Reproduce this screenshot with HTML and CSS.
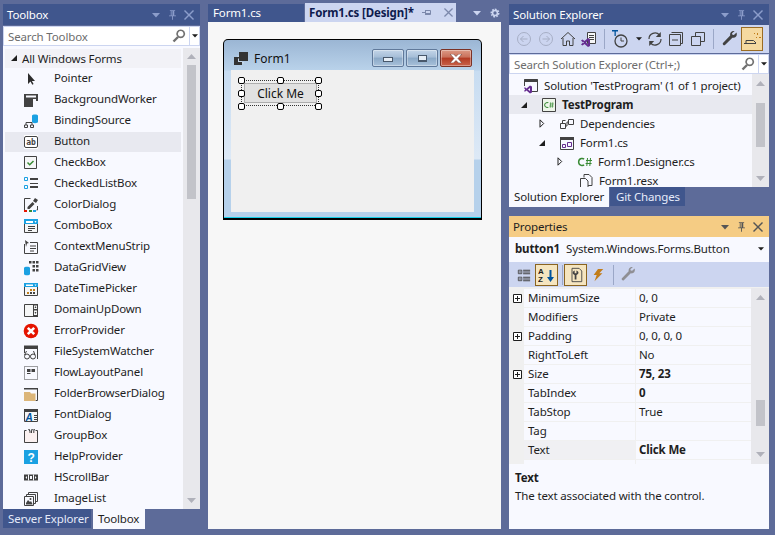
FILE: index.html
```html
<!DOCTYPE html>
<html lang="en">
<head>
<meta charset="utf-8">
<title>Form1.cs [Design]</title>
<link rel="stylesheet" href="styles.css">
</head>
<body>
<svg class="sprites" xmlns="http://www.w3.org/2000/svg">
  <symbol id="t-arrow" viewBox="0 0 8 5"><path d="M0 0h8L4 4.500z"/></symbol>
  <symbol id="t-pin" viewBox="0 0 8 11"><path d="M1 0h6v1H6v5h2v1H4.500v4h-1V7H0V6h2V1H1zM3 1v5h1V1z"/></symbol>
  <symbol id="t-close" viewBox="0 0 10 10"><path d="M1 0l4 4 4-4 1 1-4 4 4 4-1 1-4-4-4 4-1-1 4-4-4-4z"/></symbol>
  <symbol id="mag" viewBox="0 0 14 14"><path fill="none" stroke="#717171" stroke-width="1.600" d="M8.700 1.200a3.600 3.600 0 1 0 .01 0z"/><path fill="none" stroke="#717171" stroke-width="2.400" d="M6 8L1.500 12.500"/></symbol>
  <symbol id="csharp" viewBox="0 0 16 10"><path fill="none" stroke="#388a34" stroke-width="1.500" d="M7 2.200C6.300 1.200 2 .6 1.600 5c.3 4.300 4.700 3.800 5.400 2.800"/><path fill="none" stroke="#388a34" d="M10.500 1l-.7 8M13.500 1l-.7 8M9 3.500h6M8.600 6.500h6"/></symbol>
  <symbol id="wrench" viewBox="0 0 16 16"><path d="M14.500 1.500l-2.600 2.600-1.500-.3-.4-1.500L12.700 0C10 -.6 7.600 1.500 8.200 4.500L1 12c-1 1.200.8 3 2 2l7.400-7.300c3.100.8 5.300-2 4.100-5.200z"/></symbol>
  <symbol id="plus" viewBox="0 0 9 9"><path fill="#fff" stroke="#1e1e1e" d="M.5.500h8v8h-8z"/><path fill="none" stroke="#1e1e1e" d="M2 4.500h5M4.500 2v5"/></symbol>
</svg>

<main class="app">
  <section class="column toolbox-col">
    <header class="title-bar">
      <span class="title-text">Toolbox</span>
      <span class="title-tools"><svg class="t-a"><use href="#t-arrow"/></svg><svg class="t-p"><use href="#t-pin"/></svg><svg class="t-c"><use href="#t-close"/></svg></span>
    </header>
    <div class="search">
      <span class="search-text">Search Toolbox</span>
      <svg class="mag"><use href="#mag"/></svg>
      <span class="search-drop"><svg class="drop"><use href="#t-arrow"/></svg></span>
    </div>
    <div class="list-wrap">
      <ul class="tool-list">
        <li class="tool-head"><svg class="twisty-open" viewBox="0 0 6 6"><path d="M6 0v6H0z"/></svg>All Windows Forms</li>
        <li class="tool"><svg class="ico" viewBox="0 0 16 16"><path fill="#2d2d2d" d="M5 2v11l2.500-2.500 1.800 3.300 1.300-.7-1.700-3.100H12z"/></svg>Pointer</li>
        <li class="tool"><svg class="ico" viewBox="0 0 16 16"><path fill="#424242" d="M1 2h14v7h-2V7H10v8H1z"/><path fill="#f8f9ff" d="M3 3.500h10v2H3z"/></svg>BackgroundWorker</li>
        <li class="tool"><svg class="ico" viewBox="0 0 16 16"><path fill="#1ba1e2" d="M9 2.500c0-1.500 6-1.500 6 0V9c0 1.500-6 1.500-6 0z"/><path fill="none" stroke="#424242" d="M1.500 14.500h3v-2.500h-3zM3 12V9.500h6V12M7.500 14.500h3v-2.500h-3z"/></svg>BindingSource</li>
        <li class="tool hot"><svg class="ico" viewBox="0 0 16 16"><rect x="1" y="1" width="14" height="14" fill="#fff"/><rect x="1.500" y="2.500" width="13" height="11" rx="1.500" fill="none" stroke="#424242"/><text x="8" y="11" class="ab">ab</text></svg>Button</li>
        <li class="tool"><svg class="ico" viewBox="0 0 16 16"><path fill="#f5f6f7" stroke="#424242" d="M1.500 1.500h12v12h-12z"/><path fill="none" stroke="#388a34" stroke-width="1.500" d="M4.500 7.500l2.200 2.200L10.500 6"/></svg>CheckBox</li>
        <li class="tool"><svg class="ico" viewBox="0 0 16 16"><path fill="none" stroke="#1ba1e2" d="M1.500 1.500h3v3h-3zM1.500 9.500h3v3h-3z"/><path fill="#424242" d="M7 2h8v2H7zM7 7h8v1H7zM7 10h8v2H7z"/></svg>CheckedListBox</li>
        <li class="tool"><svg class="ico" viewBox="0 0 16 16"><path fill="none" stroke="#424242" d="M1.500 13V1.500h6M14.500 9v4h-1"/><path fill="#424242" d="M4.500 10l5-5 2 2-5 5H4.500zM10 4l2-3 3 2-2 3z"/><path fill="#e51400" d="M1 13h3v2H1z"/><path fill="#388a34" d="M6 13h3v2H6z"/><path fill="#1ba1e2" d="M10 13h3v2h-3z"/></svg>ColorDialog</li>
        <li class="tool"><svg class="ico" viewBox="0 0 16 16"><path fill="#f5f6f7" stroke="#424242" d="M1.500 1.500h13v13h-13z"/><path fill="#1ba1e2" d="M1 1h14v5H1z"/><path fill="#fff" d="M3 3h7v2H3zM11.500 3h2l-1 2z"/><path fill="#424242" d="M5 8h7v1H5zM5 10h7v1H5zM5 12h4v1H5z"/></svg>ComboBox</li>
        <li class="tool"><svg class="ico" viewBox="0 0 16 16"><path fill="none" stroke="#424242" d="M1.500 5v9.500h13v-11H7"/><path fill="#424242" d="M2 1l4 3-2 .5L3 8zM7 6.500h6v1H7zM7 9h6v1H7zM7 11.500h4v1H7z"/></svg>ContextMenuStrip</li>
        <li class="tool"><svg class="ico" viewBox="0 0 16 16"><path fill="#1ba1e2" d="M1 8c0-1.700 6-1.700 6 0v6c0 1.700-6 1.700-6 0z"/><path fill="#424242" d="M6 1h2.500v2.500H6zM9.500 1H12v2.500H9.500zM13 1h2.500v2.500H13zM9.500 5H12v2.500H9.500zM13 5h2.500v2.500H13zM9.500 9H12v2.500H9.500zM13 9h2.500v2.500H13z"/></svg>DataGridView</li>
        <li class="tool"><svg class="ico" viewBox="0 0 16 16"><path fill="#f5f6f7" stroke="#424242" d="M1.500 2.500h13v12h-13z"/><path fill="#1ba1e2" d="M1 2h14v4H1z"/><path fill="#fff" d="M3 3.500h7v1.500H3zM11.500 3.500h2l-1 1.500z"/><path fill="#c27d1a" d="M7 8h2v2H7zM10 8h2v2h-2zM4 11h2v2H4z"/><path fill="#424242" d="M7 11h2v2H7zM10 11h2v2h-2z"/></svg>DateTimePicker</li>
        <li class="tool"><svg class="ico" viewBox="0 0 16 16"><path fill="#f5f6f7" stroke="#424242" d="M1.500 2.500h13v12h-13z"/><path fill="#424242" d="M10 2h5v13h-5z"/><path fill="#f5f6f7" d="M11 3.500h3v3.500h-3zM11 8.500h3V13h-3z"/><path fill="#424242" d="M12.500 4l1 2h-2zM11.500 10h2l-1 2z"/></svg>DomainUpDown</li>
        <li class="tool"><svg class="ico" viewBox="0 0 16 16"><circle cx="8" cy="8" r="7.300" fill="#e51400"/><path fill="none" stroke="#fff" stroke-width="2.600" d="M4.800 4.800l6.400 6.400M11.200 4.800l-6.400 6.400"/></svg>ErrorProvider</li>
        <li class="tool"><svg class="ico" viewBox="0 0 16 16"><path fill="none" stroke="#424242" d="M1.500 9V2.500h13V15"/><path fill="#424242" d="M1 1.500h14V5H1z"/><circle cx="4" cy="12.500" r="2.500" fill="none" stroke="#424242"/><circle cx="10" cy="12.500" r="2.500" fill="none" stroke="#424242"/><path fill="none" stroke="#424242" d="M6.500 12h1M1.500 11l2-4M12 11l-1.500-4"/></svg>FileSystemWatcher</li>
        <li class="tool"><svg class="ico" viewBox="0 0 16 16"><path fill="none" stroke="#424242" stroke-dasharray="1 1" d="M1.500 1.500h13v13h-13z"/><path fill="#424242" d="M4 4h3.500v3H4zM8.500 4H12v3H8.500zM4 8h3.500v1H4z"/></svg>FlowLayoutPanel</li>
        <li class="tool"><svg class="ico" viewBox="0 0 16 16"><path fill="none" stroke="#424242" d="M1.500 2.500h13v12h-2"/><path fill="#424242" d="M1 2h14v1.500H1z"/><path fill="#dcb67a" d="M1 6h6l1 1.500h4.500V15H1z"/></svg>FolderBrowserDialog</li>
        <li class="tool"><svg class="ico" viewBox="0 0 16 16"><path fill="#f5f6f7" stroke="#424242" d="M1.500 2.500h13v12h-13z"/><path fill="#424242" d="M1 2h14v3H1zM11 8h3v1h-3zM11 10h3v1h-3zM11 12h3v1h-3z"/><text x="6" y="14" class="glyph-a">A</text></svg>FontDialog</li>
        <li class="tool"><svg class="ico" viewBox="0 0 16 16"><path fill="#fbf1f1" d="M1 3h14v12H1z"/><path fill="none" stroke="#424242" d="M3.500 2.500h-2v12h13v-12h-2"/><path fill="#424242" d="M5 1h1.500l1 2v2h-1V3.500zM8.500 1H10L9 3v2H8V3zM10.500 1H12l-.7 2v2h-1V3z"/></svg>GroupBox</li>
        <li class="tool"><svg class="ico" viewBox="0 0 16 16"><path fill="#1ba1e2" d="M1 1h14v14H1z"/><text x="8" y="12.500" class="glyph-q">?</text></svg>HelpProvider</li>
        <li class="tool"><svg class="ico" viewBox="0 0 16 16"><path fill="#424242" d="M1 4.500h14v6H1z"/><path fill="#f8f9ff" d="M5 4.500h1v6H5zM10 4.500h1v6h-1zM7 6h2v3H7z"/><path fill="#f8f9ff" d="M4 6v3L2.500 7.500zM12 6v3l1.500-1.500z"/></svg>HScrollBar</li>
        <li class="tool"><svg class="ico" viewBox="0 0 16 16"><path fill="none" stroke="#424242" d="M1.500 5.500h9v9h-9zM3.500 5V3.500h9v9H11M5.500 3V1.500h9v9H13"/><path fill="#424242" d="M3 12l2-3 2 2 1-1 1.500 3v.5H3z"/><circle cx="7.500" cy="8" r="1" fill="#424242"/></svg>ImageList</li>
      </ul>
      <div class="scroll scroll-toolbox">
        <svg class="s-up" viewBox="0 0 9 5"><path d="M4.500 0L9 5H0z"/></svg>
        <div class="thumb"></div>
        <svg class="s-down" viewBox="0 0 9 5"><path d="M0 0h9L4.500 5z"/></svg>
      </div>
    </div>
    <nav class="bottom-tabs tool-tabs">
      <span class="btab">Server Explorer</span>
      <span class="btab on">Toolbox</span>
    </nav>
  </section>

  <section class="column doc-col">
    <div class="doc-tabs">
      <span class="doc-tab">Form1.cs</span>
      <span class="doc-tab active"><span class="tab-label">Form1.cs [Design]*</span>
        <svg class="tab-pin" viewBox="0 0 10 8"><path fill="none" stroke="#7c88ab" d="M0 3.500h3.500M3.500 1v5M3.500 1.500h5v4h-5M3.500 4.500h5"/></svg>
        <svg class="tab-close"><use href="#t-close"/></svg>
      </span>
      <span class="doc-tools">
        <svg class="doc-drop"><use href="#t-arrow"/></svg>
        <svg class="gear" viewBox="0 0 10 10"><path fill="none" stroke="#ccd5f0" stroke-width="2" stroke-dasharray="1.600 1" d="M5 1.500a3.500 3.500 0 1 1-.01 0z"/><circle cx="5" cy="5" r="2.400" fill="none" stroke="#ccd5f0" stroke-width="1.500"/></svg>
      </span>
    </div>
    <div class="design-surface">
      <div class="win-form">
        <div class="win-title">
          <svg class="win-ico" viewBox="0 0 14 13"><path fill="#333" d="M5 0h9v9H5z"/><path fill="#c6d7ea" d="M3.500 3.500H5V10h5v1.500H3.500z"/><path fill="#333" d="M0 5h8v8H0z"/><path fill="#c6d7ea" d="M4 6.500h1V9h3v1H4z"/></svg>
          <span class="win-name">Form1</span>
          <span class="win-btns">
            <span class="wb"><i class="wb-min"></i></span>
            <span class="wb"><i class="wb-max"></i></span>
            <span class="wb wb-close"><svg viewBox="0 0 12 9"><path fill="#fff" stroke="#6b3a30" stroke-width=".6" d="M0 0h3.500L6 2.500 8.500 0H12L8 4.500 12 9H8.500L6 6.500 3.500 9H0L4 4.500z"/></svg></span>
          </span>
        </div>
        <div class="win-client">
          <div class="selection">
            <button class="win-button" type="button">Click Me</button>
            <i class="hd h-tl"></i><i class="hd h-tc"></i><i class="hd h-tr"></i>
            <i class="hd h-ml"></i><i class="hd h-mr"></i>
            <i class="hd h-bl"></i><i class="hd h-bc"></i><i class="hd h-br"></i>
          </div>
        </div>
      </div>
    </div>
  </section>

  <section class="column right-col">
    <div class="sol-panel">
      <header class="title-bar">
        <span class="title-text">Solution Explorer</span>
        <span class="title-tools"><svg class="t-a"><use href="#t-arrow"/></svg><svg class="t-p"><use href="#t-pin"/></svg><svg class="t-c"><use href="#t-close"/></svg></span>
      </header>
      <div class="toolbar sol-toolbar">
        <svg class="tb i-back" viewBox="0 0 16 16"><circle cx="8" cy="8" r="6.500" fill="none" stroke="#a7afc6"/><path fill="none" stroke="#a7afc6" d="M11.500 8h-7M7.500 5l-3 3 3 3"/></svg>
        <svg class="tb i-fwd" viewBox="0 0 16 16"><circle cx="8" cy="8" r="6.500" fill="none" stroke="#a7afc6"/><path fill="none" stroke="#a7afc6" d="M4.500 8h7M8.500 5l3 3-3 3"/></svg>
        <svg class="tb i-home" viewBox="0 0 16 16"><path fill="none" stroke="#424242" d="M1 8l7-6.500L15 8M3 7v7.500h3.500V10h3v4.500H13V7"/></svg>
        <svg class="tb i-vsdoc" viewBox="0 0 16 16"><path fill="#f5f6f7" stroke="#424242" d="M6.500 1.500h8v11h-8z"/><path fill="#424242" d="M8 4h5v1H8zM8 6h5v1H8zM8 8h5v1H8z"/><path fill="#652d90" d="M0 9.500l1.500-1 2 1.500L7 7l2 1v7l-2 1-3.500-3-2 1.500-1.500-1 2-2zM3 11.500l-1-.8v1.600zM7 9.500L5 11.500l2 2z"/></svg>
        <i class="tb-sep"></i>
        <svg class="tb i-clock" viewBox="0 0 18 18"><path fill="#00539c" d="M0 0h6v1.500H3.800V6H2.500V1.500H0z"/><circle cx="9" cy="11" r="6" fill="none" stroke="#424242" stroke-width="1.300"/><path fill="none" stroke="#424242" d="M9 7.500V11h3"/></svg>
        <svg class="tb-drop"><use href="#t-arrow"/></svg>
        <svg class="tb i-refresh" viewBox="0 0 16 16"><path fill="none" stroke="#424242" stroke-width="1.200" d="M2 8a6 6 0 0 1 10.500-4M14 8a6 6 0 0 1-10.500 4"/><path fill="#424242" d="M13.800 1v5h-5zM2.200 15v-5h5z"/></svg>
        <svg class="tb i-collapse" viewBox="0 0 16 16"><path fill="#ccd5f0" stroke="#424242" d="M3.500 1.500h11v11h-2"/><path fill="#ccd5f0" stroke="#424242" d="M1.500 3.500h11v11h-11z"/><path fill="#424242" d="M4 8.500h6v1H4z"/></svg>
        <svg class="tb i-copy" viewBox="0 0 16 16"><path fill="#ccd5f0" stroke="#424242" d="M5.500 1.500h9v9h-9z"/><path fill="#ccd5f0" stroke="#424242" d="M1.500 5.500h9v9h-9z"/></svg>
        <i class="tb-sep sep2"></i>
        <svg class="tb i-wrench"><use href="#wrench"/></svg>
        <span class="tb-active"><svg viewBox="0 0 18 14"><path fill="none" stroke="#424242" d="M1 11.500h12M3 11V8.500h7.500L13 11"/><path fill="#c27d1a" d="M14 1h1v2h-1zM11 1h1v1h-1zM16 5h2v1h-2zM13 5h1v1h-1z"/></svg></span>
      </div>
      <div class="search">
        <span class="search-text">Search Solution Explorer (Ctrl+;)</span>
        <svg class="mag"><use href="#mag"/></svg>
        <span class="search-drop"><svg class="drop"><use href="#t-arrow"/></svg></span>
      </div>
      <div class="list-wrap tree-wrap">
        <ul class="tree">
          <li class="node lv0"><svg class="node-ico" viewBox="0 0 16 16"><path fill="none" stroke="#424242" d="M1.500 8V1.500h13v12H9"/><path fill="#424242" d="M1 1.500h14V4H1z"/><path fill="#652d90" d="M1 10l1-.8 1.500 1.300L7 7.500l2 1v6l-2 1L3.500 12.500 2 13.800l-1-.8 1.300-1.500zM7 10L5 11.500 7 13z"/></svg>Solution 'TestProgram' (1 of 1 project)</li>
          <li class="node lv1 selected"><svg class="tw open" viewBox="0 0 6 6"><path d="M6 0v6H0z"/></svg><svg class="node-ico" viewBox="0 0 16 16"><path fill="#eef5ea" stroke="#424242" d="M1.500 1.500h13v13h-13z"/><use href="#csharp" x="2.500" y="4" width="11" height="8"/></svg><b>TestProgram</b></li>
          <li class="node lv2"><svg class="tw" viewBox="0 0 5 9"><path fill="none" stroke="#1e1e1e" d="M.5.800v7.400L4.200 4.500z"/></svg><svg class="node-ico" viewBox="0 0 16 16"><path fill="none" stroke="#424242" d="M1.500 7.500h5v5h-5zM9.500 3.500h5v5h-5zM6.500 10H8V6h1.500M3.500 7V4.500h3"/></svg>Dependencies</li>
          <li class="node lv2"><svg class="tw open" viewBox="0 0 6 6"><path d="M6 0v6H0z"/></svg><svg class="node-ico" viewBox="0 0 16 16"><path fill="none" stroke="#424242" d="M1.500 2.500h13v12h-13z"/><path fill="#424242" d="M1 2h14v3H1z"/><path fill="none" stroke="#652d90" d="M3.500 9.500h3v3h-3zM8.500 7.500h4v4h-4z"/></svg>Form1.cs</li>
          <li class="node lv3"><svg class="tw" viewBox="0 0 5 9"><path fill="none" stroke="#1e1e1e" d="M.5.800v7.400L4.200 4.500z"/></svg><svg class="node-ico" viewBox="0 0 16 16"><use href="#csharp" x="0" y="3" width="16" height="10"/></svg>Form1.Designer.cs</li>
          <li class="node lv3"><svg class="node-ico leaf" viewBox="0 0 16 16"><path fill="none" stroke="#424242" d="M6 4.500V1.500h5l3 3v8h-4"/><path fill="#f8f9ff" stroke="#424242" d="M2.500 5.500h5l2.500 2.500v7.500H2.500z"/></svg>Form1.resx</li>
        </ul>
        <div class="scroll scroll-tree">
          <svg class="s-up" viewBox="0 0 9 5"><path d="M4.500 0L9 5H0z"/></svg>
          <div class="thumb"></div>
          <svg class="s-down" viewBox="0 0 9 5"><path d="M0 0h9L4.500 5z"/></svg>
        </div>
      </div>
      <nav class="bottom-tabs sol-tabs">
        <span class="btab on">Solution Explorer</span>
        <span class="btab">Git Changes</span>
      </nav>
    </div>

    <div class="prop-panel">
      <header class="title-bar focus">
        <span class="title-text">Properties</span>
        <span class="title-tools"><svg class="t-a"><use href="#t-arrow"/></svg><svg class="t-p"><use href="#t-pin"/></svg><svg class="t-c"><use href="#t-close"/></svg></span>
      </header>
      <div class="obj-row"><b class="obj-name">button1</b><span class="obj-type">System.Windows.Forms.Button</span><svg class="obj-drop"><use href="#t-arrow"/></svg></div>
      <div class="toolbar prop-toolbar">
        <svg class="pt p-cat" viewBox="0 0 16 16"><path fill="none" stroke="#424242" d="M1.500 2.500h4v4h-4zM1.500 10.500h4v4h-4z"/><path fill="#424242" d="M2.500 4h2v1h-2zM2.500 12h2v1h-2zM7 2h8v1H7zM7 4h8v1H7zM7 6h8v1H7zM7 10h8v1H7zM7 12h8v1H7zM7 14h8v1H7z"/></svg>
        <span class="pt-active a1"><svg viewBox="0 0 18 16"><text x="0" y="7" class="az">A</text><text x="0" y="15" class="az">Z</text><path fill="#00539c" d="M11.500 3h2v7H16l-3.500 5L9 10h2.500z"/></svg></span>
        <i class="tb-sep sep3"></i>
        <span class="pt-active a2"><svg viewBox="0 0 18 18"><path fill="none" stroke="#424242" d="M4.500 1.500h8l3 3v12h-11z"/><path fill="#424242" d="M7.500 4c-3 1-3 4 0 5v5h2V9c3-1 3-4 0-5v3h-2z"/></svg></span>
        <svg class="pt p-bolt" viewBox="0 0 16 16"><path fill="#c27d1a" d="M8 1h6L9.500 6H13L4 15l2.500-7H3z"/></svg>
        <i class="tb-sep sep4"></i>
        <svg class="pt p-wrench"><use href="#wrench"/></svg>
      </div>
      <div class="grid-wrap">
        <div class="prop-grid">
          <div class="prow"><span class="gut"><svg class="plus"><use href="#plus"/></svg></span><span class="pname">MinimumSize</span><span class="pval">0, 0</span></div>
          <div class="prow"><span class="gut"></span><span class="pname">Modifiers</span><span class="pval">Private</span></div>
          <div class="prow"><span class="gut"><svg class="plus"><use href="#plus"/></svg></span><span class="pname">Padding</span><span class="pval">0, 0, 0, 0</span></div>
          <div class="prow"><span class="gut"></span><span class="pname">RightToLeft</span><span class="pval">No</span></div>
          <div class="prow"><span class="gut"><svg class="plus"><use href="#plus"/></svg></span><span class="pname">Size</span><span class="pval"><b>75, 23</b></span></div>
          <div class="prow"><span class="gut"></span><span class="pname">TabIndex</span><span class="pval"><b>0</b></span></div>
          <div class="prow"><span class="gut"></span><span class="pname">TabStop</span><span class="pval">True</span></div>
          <div class="prow"><span class="gut"></span><span class="pname">Tag</span><span class="pval"></span></div>
          <div class="prow current"><span class="gut"></span><span class="pname">Text</span><span class="pval"><b>Click Me</b></span></div>
          <div class="prow clip"><span class="gut"></span><span class="pname"></span><span class="pval"></span></div>
        </div>
        <div class="scroll scroll-grid">
          <svg class="s-up" viewBox="0 0 9 5"><path d="M4.500 0L9 5H0z"/></svg>
          <div class="thumb"></div>
          <svg class="s-down" viewBox="0 0 9 5"><path d="M0 0h9L4.500 5z"/></svg>
        </div>
      </div>
      <div class="desc">
        <b>Text</b>
        <p>The text associated with the control.</p>
      </div>
    </div>
  </section>
</main>
</body>
</html>
```

FILE: styles.css
```css
* { box-sizing: border-box; }
html, body { margin: 0; padding: 0; height: 100%; }
body {
  background: #5d6b99;
  font-family: "Noto Sans", "Open Sans", sans-serif;
  font-size: 11.5px;
  letter-spacing: -.15px;
  color: #1e1e1e;
  overflow: hidden;
}
b { font-weight: 700; }
ul { list-style: none; margin: 0; padding: 0; }
.sprites { display: none; }

.app { display: flex; height: 535px; padding: 4px 0 6px 3px; gap: 8px; }
.column { display: flex; flex-direction: column; height: 525px; }
.toolbox-col { width: 197px; }
.doc-col { width: 293px; }
.right-col { width: 260px; gap: 9px; }

.title-bar {
  display: flex; align-items: center; justify-content: space-between;
  height: 21px; flex: none;
  background: #40568d; color: #fff;
  padding: 0 0 0 4px;
}
.title-text { line-height: 21px; }
.title-tools { display: flex; align-items: center; height: 21px; }
.title-tools svg { fill: #8c9dcb; display: block; }
.t-a { width: 8px; height: 5px; margin-right: 9px; margin-top: 1px; }
.t-p { width: 7px; height: 10px; margin-right: 8px; }
.t-c { width: 10px; height: 10px; margin-right: 6px; }
.focus { background: #f5cc84; color: #1e1e1e; }
.title-bar.focus .title-tools svg { fill: #555; }

.search {
  display: flex; align-items: center;
  height: 20px; margin-top: 1px; flex: none;
  background: #fff; border: 1px solid #ccd5f0;
  padding-left: 4px;
}
.search-text { flex: 1; color: #6d6d6d; line-height: 17px; white-space: nowrap; }
.mag { width: 14px; height: 14px; margin-right: 3px; }
.search-drop { width: 10px; height: 18px; display: flex; align-items: center; justify-content: center; border-left: 1px solid #ccd5f0; }
.drop { width: 6px; height: 4px; fill: #1e1e1e; display: block; }

.list-wrap { display: flex; flex: 1; min-height: 0; background: #f8f9ff; }
.tool-list { flex: 1; padding: 2px 2px 0 2px; overflow: hidden; }
.tool-head {
  display: flex; align-items: center; height: 20px;
  border-top: 1px solid #f8f9ff;
  background: #f2f2f7;
  padding: 0 0 1px 6px; white-space: nowrap;
}
.twisty-open { width: 6px; height: 6px; margin-right: 5px; fill: #1e1e1e; }
.tool { display: flex; align-items: center; height: 21px; padding: 0 0 2px 18px; white-space: nowrap; }
.tool .ico { margin-top: 2px; }
.hot { background: #e8e9f0; border-top: 1px solid #f8f9ff; padding-bottom: 3px; }
.ico { width: 16px; height: 16px; flex: none; margin-right: 15px; }
.ab { font: 700 8px "DejaVu Sans Mono", monospace; fill: #424242; text-anchor: middle; }
.glyph-a { font: italic 700 10px "Liberation Sans", sans-serif; fill: #00539c; text-anchor: middle; }
.glyph-q { font: 700 12px "Liberation Sans", sans-serif; fill: #fff; text-anchor: middle; }
.az { font: 700 8px "Liberation Sans", sans-serif; fill: #1e1e1e; }

.scroll {
  width: 17px; flex: none; background: #e8e8ec;
  display: flex; flex-direction: column; align-items: center;
}
.scroll svg { fill: #b0b1ba; display: block; flex: none; }
.s-up { width: 9px; height: 5px; }
.s-down { width: 9px; height: 5px; margin-top: auto; }
.thumb { background: #c2c3c9; }
.scroll-toolbox { margin-top: 2px; padding: 6px 0 6px; }
.scroll-toolbox .thumb { width: 9px; height: 134px; margin-top: 6px; }
.scroll-tree { padding: 7px 0 6px; }
.scroll-tree .thumb { width: 9px; height: 44px; margin-top: 17px; }
.scroll-grid { padding: 7px 0 7px; }
.scroll-grid .thumb { width: 9px; height: 26px; margin-top: 100px; }

.bottom-tabs { display: flex; height: 20px; flex: none; gap: 2px; }
.btab { background: #40568d; color: #e6ebfa; padding: 0 5px; line-height: 19px; height: 19px; white-space: nowrap; }
.btab.on { background: #f8f9ff; color: #1e1e1e; height: 20px; }
.tool-tabs .btab { width: 88px; }
.tool-tabs .btab.on { width: 52px; }

.doc-tabs { display: flex; height: 18px; flex: none; align-items: flex-start; }
.doc-tab { height: 18px; width: 96px; background: #40568d; color: #fff; padding-left: 5px; line-height: 17px; flex: none; }
.doc-tab.active {
  width: 151px; height: 19px; margin: -1px 0 0 1px;
  background: #ccd5f0; color: #0e1a4d;
  padding-left: 4px; line-height: 19px;
  display: flex; align-items: center;
}
.tab-label { font-weight: 700; white-space: nowrap; width: 104px; flex: none; }
.tab-pin { width: 10px; height: 8px; margin-left: 9px; flex: none; }
.tab-close { width: 9px; height: 9px; margin-left: 12px; fill: #7c88ab; flex: none; }
.doc-tools { display: flex; align-items: center; height: 18px; margin-left: 17px; }
.doc-drop { width: 8px; height: 5px; fill: #ccd5f0; }
.gear { width: 10px; height: 10px; margin-left: 9px; }

.design-surface { flex: 1; background: #f7f7f7; padding: 17px 0 0 15px; }
.win-form {
  width: 259px; height: 181px;
  border: 1px solid #000; border-radius: 5px 5px 0 0;
  border-bottom-width: 2px;
  box-shadow: inset 0 -1px 0 #17cfe8;
  background: linear-gradient(180deg, #9bb6d4 0, #b9d2ea 30px, #c7dcf1 31px, #dde9f6 119px, #b6d1eb 120px, #b6d1eb 100%);
  padding: 0 7px;
  display: flex; flex-direction: column;
}
.win-title { height: 30px; display: flex; align-items: center; flex: none; padding: 6px 0 0 3px; }
.win-ico { width: 14px; height: 13px; margin-right: 6px; flex: none; }
.win-name { flex: 1; color: #111; font-size: 12px; letter-spacing: 0; }
.win-btns { display: flex; gap: 2px; margin-right: 2px; }
.wb {
  width: 32px; height: 18px; border: 1px solid #60799a; border-radius: 2px;
  background: linear-gradient(180deg, #c3d5e8 0, #a5bdd7 45%, #8aa8c6 50%, #a8c1da 100%);
  box-shadow: inset 0 0 0 1px rgba(255,255,255,.35);
  display: flex; align-items: center; justify-content: center;
}
.wb-close { border-color: #7b3225; background: linear-gradient(180deg, #dc9a85 0, #c9705a 45%, #b23a22 50%, #c9624a 100%); }
.wb-close svg { width: 12px; height: 9px; }
.wb-min { width: 10px; height: 5px; background: #e6eef6; border: 1px solid #48586b; margin-top: 2px; display: block; }
.wb-max { width: 9px; height: 7px; background: #e6eef6; border: 1px solid #48586b; border-width: 1px 1px 2px; display: block; }

.win-client { width: 243px; height: 142px; background: #f0f0f0; padding: 10px 0 0 10px; flex: none; }
.selection {
  position: relative; width: 78px; height: 26px;
  border: 1px dotted #333; padding: 2px;
}
.win-button {
  display: block; width: 73px; height: 20px; padding: 0;
  background: #e1e1e1; border: 1px solid #adadad;
  font: 12px "Noto Sans", sans-serif; color: #111;
}
.hd { position: absolute; width: 7px; height: 7px; background: #fff; border: 1px solid #000; border-radius: 2px; display: block; }
.h-tl, .h-tc, .h-tr { top: -4px; }
.h-ml, .h-mr { top: 9px; }
.h-bl, .h-bc, .h-br { top: 22px; }
.h-tl, .h-ml, .h-bl { left: -4px; }
.h-tc, .h-bc { left: 35px; }
.h-tr, .h-mr, .h-br { left: 73px; }

.sol-panel { display: flex; flex-direction: column; height: 203px; flex: none; }
.toolbar { display: flex; align-items: center; background: #ccd5f0; flex: none; }
.sol-toolbar { height: 28px; padding-left: 7px; }
.tb { width: 16px; height: 16px; flex: none; display: block; }
.tb-sep { width: 1px; height: 20px; background: #9ba7c7; display: block; flex: none; }
.i-fwd { margin-left: 6px; }
.i-home { margin-left: 6px; }
.i-vsdoc { margin-left: 5px; }
.sol-toolbar .tb-sep { margin-left: 7px; }
.i-clock { width: 18px; height: 18px; margin-left: 7px; }
.tb-drop { width: 6px; height: 4px; fill: #1e1e1e; margin-left: 6px; }
.i-refresh { margin-left: 5px; }
.i-collapse { margin-left: 5px; }
.i-copy { margin-left: 6px; }
.sol-toolbar .sep2 { margin-left: 7px; }
.i-wrench { margin-left: 8px; fill: #424242; }
.tb-active {
  width: 22px; height: 24px; margin-left: 3px; flex: none;
  background: #f5d9a0; border: 1px solid #9a6c24;
  display: flex; align-items: center; justify-content: center;
}
.tb-active svg { width: 18px; height: 14px; }

.tree-wrap { padding-top: 2px; }
.tree { flex: 1; overflow: hidden; }
.node { display: flex; align-items: center; height: 19px; white-space: nowrap; }
.selected { background: #e8e9f0; }
.lv0 { padding-left: 14px; }
.lv1 { padding-left: 12px; }
.lv2 { padding-left: 30px; }
.lv3 { padding-left: 48px; }
.node-ico { width: 16px; height: 16px; flex: none; margin-right: 5px; }
.leaf { margin-left: 21px; }
.tw { width: 6px; height: 9px; flex: none; margin-right: 14px; fill: #1e1e1e; }
.tw.open { height: 6px; }
.scroll-tree { margin-top: -2px; }
.sol-tabs { gap: 1px; }
.sol-tabs .btab { width: 75px; padding: 0 6px; }
.sol-tabs .btab.on { width: 100px; padding: 0 5px; }

.prop-panel { display: flex; flex-direction: column; flex: 1; min-height: 0; background: #f0f0f0; }
.obj-row { display: flex; align-items: center; height: 25px; background: #f8f9ff; padding: 0 0 2px 6px; flex: none; white-space: nowrap; }
.obj-name { width: 44px; flex: none; }
.obj-type { margin-left: 7px; flex: 1; }
.obj-drop { width: 6px; height: 4px; fill: #1e1e1e; margin-right: 5px; }
.prop-toolbar { height: 25px; padding-left: 8px; }
.pt { width: 14px; height: 14px; flex: none; }
.pt-active {
  width: 23px; height: 22px; flex: none;
  background: #f5e5bf; border: 1px solid #8a6420;
  display: flex; align-items: center; justify-content: center;
}
.pt-active svg { width: 18px; height: 16px; }
.a1 { margin-left: 4px; }
.sep3 { margin-left: 4px; }
.a2 { margin-left: 1px; }
.p-bolt { margin-left: 4px; }
.sep4 { margin-left: 8px; }
.p-wrench { margin-left: 7px; width: 15px; height: 15px; fill: #8f8f94; }

.grid-wrap { display: flex; height: 176px; margin-top: 1px; flex: none; overflow: hidden; background: #f0f0f0; }
.prop-grid { flex: 1; padding: 1px 0 0 1px; overflow: hidden; }
.prow { display: grid; grid-template-columns: 14px 112px 115px; height: 19px; }
.gut { display: flex; align-items: center; padding-left: 3px; }
.plus { width: 9px; height: 9px; display: block; }
.pname, .pval { background: #f8f9ff; height: 18px; line-height: 17px; white-space: nowrap; }
.pname { padding-left: 4px; border-right: 1px solid #f0f0f0; }
.pval { padding-left: 3px; }
.current .pname { background: #f0f0f3; }
.clip { height: 4px; }
.scroll-grid { width: 18px; background: #e8e8ec; }

.desc { flex: 1; background: #f8f9ff; padding: 5px 6px; }
.desc b { display: block; line-height: 18px; }
.desc p { margin: 0; line-height: 18px; }
```
